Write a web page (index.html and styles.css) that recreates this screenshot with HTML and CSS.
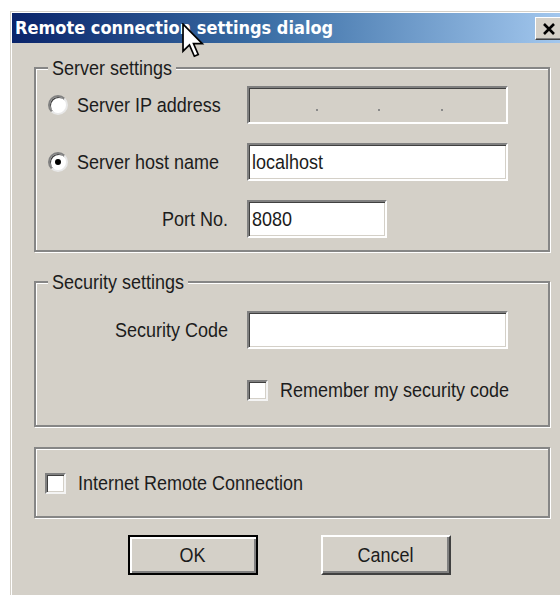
FILE: index.html
```html
<!DOCTYPE html>
<html lang="en">
<head>
<meta charset="utf-8">
<title>Remote connection settings dialog</title>
<link rel="stylesheet" href="styles.css">
</head>
<body>
<div class="window">
  <div class="titlebar">
    <span class="title">Remote connection settings dialog</span>
    <button class="close" type="button" aria-label="Close">
      <svg width="14" height="12" viewBox="0 0 14 12"><path d="M2 1 L12 11 M12 1 L2 11" stroke="#000" stroke-width="2.6" fill="none"/></svg>
    </button>
  </div>

  <div class="content">
    <fieldset class="group group-server">
      <legend><span class="txt">Server settings</span></legend>
      <div class="grid">
        <label class="opt"><span class="radio"></span><span class="txt">Server IP address</span></label>
        <div class="field wide ip">
          <span class="ip-seg"></span><span class="ip-dot"></span>
          <span class="ip-seg"></span><span class="ip-dot"></span>
          <span class="ip-seg"></span><span class="ip-dot"></span>
          <span class="ip-seg"></span>
        </div>

        <label class="opt"><span class="radio checked"></span><span class="txt">Server host name</span></label>
        <div class="field wide white"><span class="txt">localhost</span></div>

        <span class="lbl-right"><span class="txt">Port No.</span></span>
        <div class="field port white"><span class="txt">8080</span></div>
      </div>
    </fieldset>

    <fieldset class="group group-security">
      <legend><span class="txt">Security settings</span></legend>
      <div class="grid grid-security">
        <span class="lbl-right"><span class="txt">Security Code</span></span>
        <div class="field wide white"></div>

        <label class="check col2"><span class="box"></span><span class="txt">Remember my security code</span></label>
      </div>
    </fieldset>

    <fieldset class="group group-plain">
      <label class="check"><span class="box"></span><span class="txt">Internet Remote Connection</span></label>
    </fieldset>

    <div class="buttons">
      <button class="btn default" type="button"><span class="txt">OK</span></button>
      <button class="btn" type="button"><span class="txt">Cancel</span></button>
    </div>
  </div>
</div>

<!-- mouse pointer resting over the caption -->
<svg class="cursor" width="23" height="35" viewBox="0 0 13.6 20.6">
  <path d="M0.6 0.6 V16.6 L4.4 12.9 L7.3 19.6 L9.6 18.6 L6.8 12.1 L12 12.1 Z" fill="#fff" stroke="#000" stroke-width="1" stroke-linejoin="miter"/>
</svg>
</body>
</html>
```

FILE: styles.css
```css
html, body {
  margin: 0;
  padding: 0;
}

body {
  position: relative;
  width: 560px;
  height: 595px;
  overflow: hidden;
  background: #fff;
  font-family: "Liberation Sans", Arial, sans-serif;
  font-size: 18px;
  color: #1c1c1c;
}

/* tall, narrow dialog lettering */
.txt {
  display: inline-block;
  white-space: nowrap;
  transform: scaleY(1.16);
}

/* dialog frame */
.window {
  margin: 11px 0 0 10px;
  width: 560px;
  height: 600px;
  box-sizing: border-box;
  background: #d4d0c8;
  border-top: 1px solid #d4d0c8;
  border-left: 1px solid #d4d0c8;
  padding: 1px 0 0 1px;
  box-shadow: inset 1px 1px 0 #fff;
}

.titlebar {
  height: 30px;
  display: flex;
  align-items: center;
  justify-content: space-between;
  padding: 0 7px 0 3px;
  background: linear-gradient(to right, #0a246a 0%, #3a6ea5 45%, #a6caf0 100%);
}

.title {
  color: #fff;
  font-family: "DejaVu Sans Condensed", "DejaVu Sans", sans-serif;
  font-weight: bold;
  font-size: 18px;
  line-height: 30px;
  white-space: nowrap;
}

.close {
  width: 28px;
  height: 23px;
  padding: 0;
  margin-top: 1px;
  display: flex;
  align-items: center;
  justify-content: center;
  background: #d4d0c8;
  border: 1px solid;
  border-color: #fff #404040 #404040 #fff;
  box-shadow: inset -1px -1px 0 #808080;
}

.content {
  display: flex;
  flex-direction: column;
  padding: 13px 20px 0 22px;
}

/* etched group boxes */
.group {
  margin: 0;
  padding: 0;
  min-width: 0;
  border: 2px solid #868686;
  box-shadow: 1px 1px 0 #fff, inset 1px 1px 0 #fff;
}

.group legend {
  margin-left: 12px;
  padding: 0 4px;
  line-height: 24px;
  background: #d4d0c8;
}

.group-security { margin-top: 18px; }
.group-plain {
  margin-top: 20px;
  padding: 22px 0 21px 9px;
}

.grid {
  display: grid;
  grid-template-columns: 211px auto;
  row-gap: 19px;
  align-items: center;
  justify-items: start;
  padding: 6px 0 12px;
}

.grid-security {
  row-gap: 29px;
  padding: 17px 0 23px;
}

.col2 { grid-column: 2; }

.opt {
  display: flex;
  align-items: center;
  gap: 9px;
  padding-left: 12px;
  line-height: 24px;
}

.lbl-right {
  justify-self: end;
  padding-right: 19px;
  line-height: 24px;
}

/* sunken edit fields */
.field {
  box-sizing: border-box;
  height: 38px;
  padding: 0 3px;
  display: flex;
  align-items: center;
  border: 2px solid;
  border-color: #808080 #fff #fff #808080;
  box-shadow: inset 1px 1px 0 #404040, inset -1px -1px 0 #d4d0c8;
  line-height: 24px;
}

.white { background: #fff; }
.wide { width: 261px; }
.port { width: 140px; }

.ip {
  padding-left: 6px;
  background: #d4d0c8;
}

.ip-seg { width: 61px; }

.ip-dot {
  width: 2px;
  height: 2px;
  margin-top: 10px;
  background: #8a8a8a;
}

/* radio buttons */
.radio {
  position: relative;
  flex: none;
  width: 20px;
  height: 20px;
  box-sizing: border-box;
  border-radius: 50%;
  background: #fff;
  border: 2px solid;
  border-color: #808080 #e8e8e8 #e8e8e8 #808080;
  box-shadow: inset 1px 1px 0 #404040;
}

.radio.checked::after {
  content: "";
  position: absolute;
  left: 5px;
  top: 5px;
  width: 6px;
  height: 6px;
  border-radius: 50%;
  background: #000;
}

/* check boxes */
.check {
  display: flex;
  align-items: center;
  gap: 12px;
  line-height: 24px;
}

.box {
  flex: none;
  width: 21px;
  height: 21px;
  box-sizing: border-box;
  background: #fff;
  border: 2px solid;
  border-color: #808080 #f4f4f4 #f4f4f4 #808080;
  box-shadow: inset 1px 1px 0 #404040, inset -1px -1px 0 #d4d0c8;
}

/* push buttons */
.buttons {
  display: flex;
  justify-content: center;
  gap: 63px;
  margin-top: 17px;
  padding-right: 6px;
}

.btn {
  width: 130px;
  height: 40px;
  padding: 0;
  font: inherit;
  color: #1c1c1c;
  background: #d4d0c8;
  border: 2px solid;
  border-color: #fff #404040 #404040 #fff;
  box-shadow: inset -2px -2px 0 #808080;
}

.btn.default {
  border: 2px solid #000;
  box-shadow: inset 2px 2px 0 #fff, inset -2px -2px 0 #808080;
}

.cursor {
  position: absolute;
  left: 182px;
  top: 23px;
}
```
